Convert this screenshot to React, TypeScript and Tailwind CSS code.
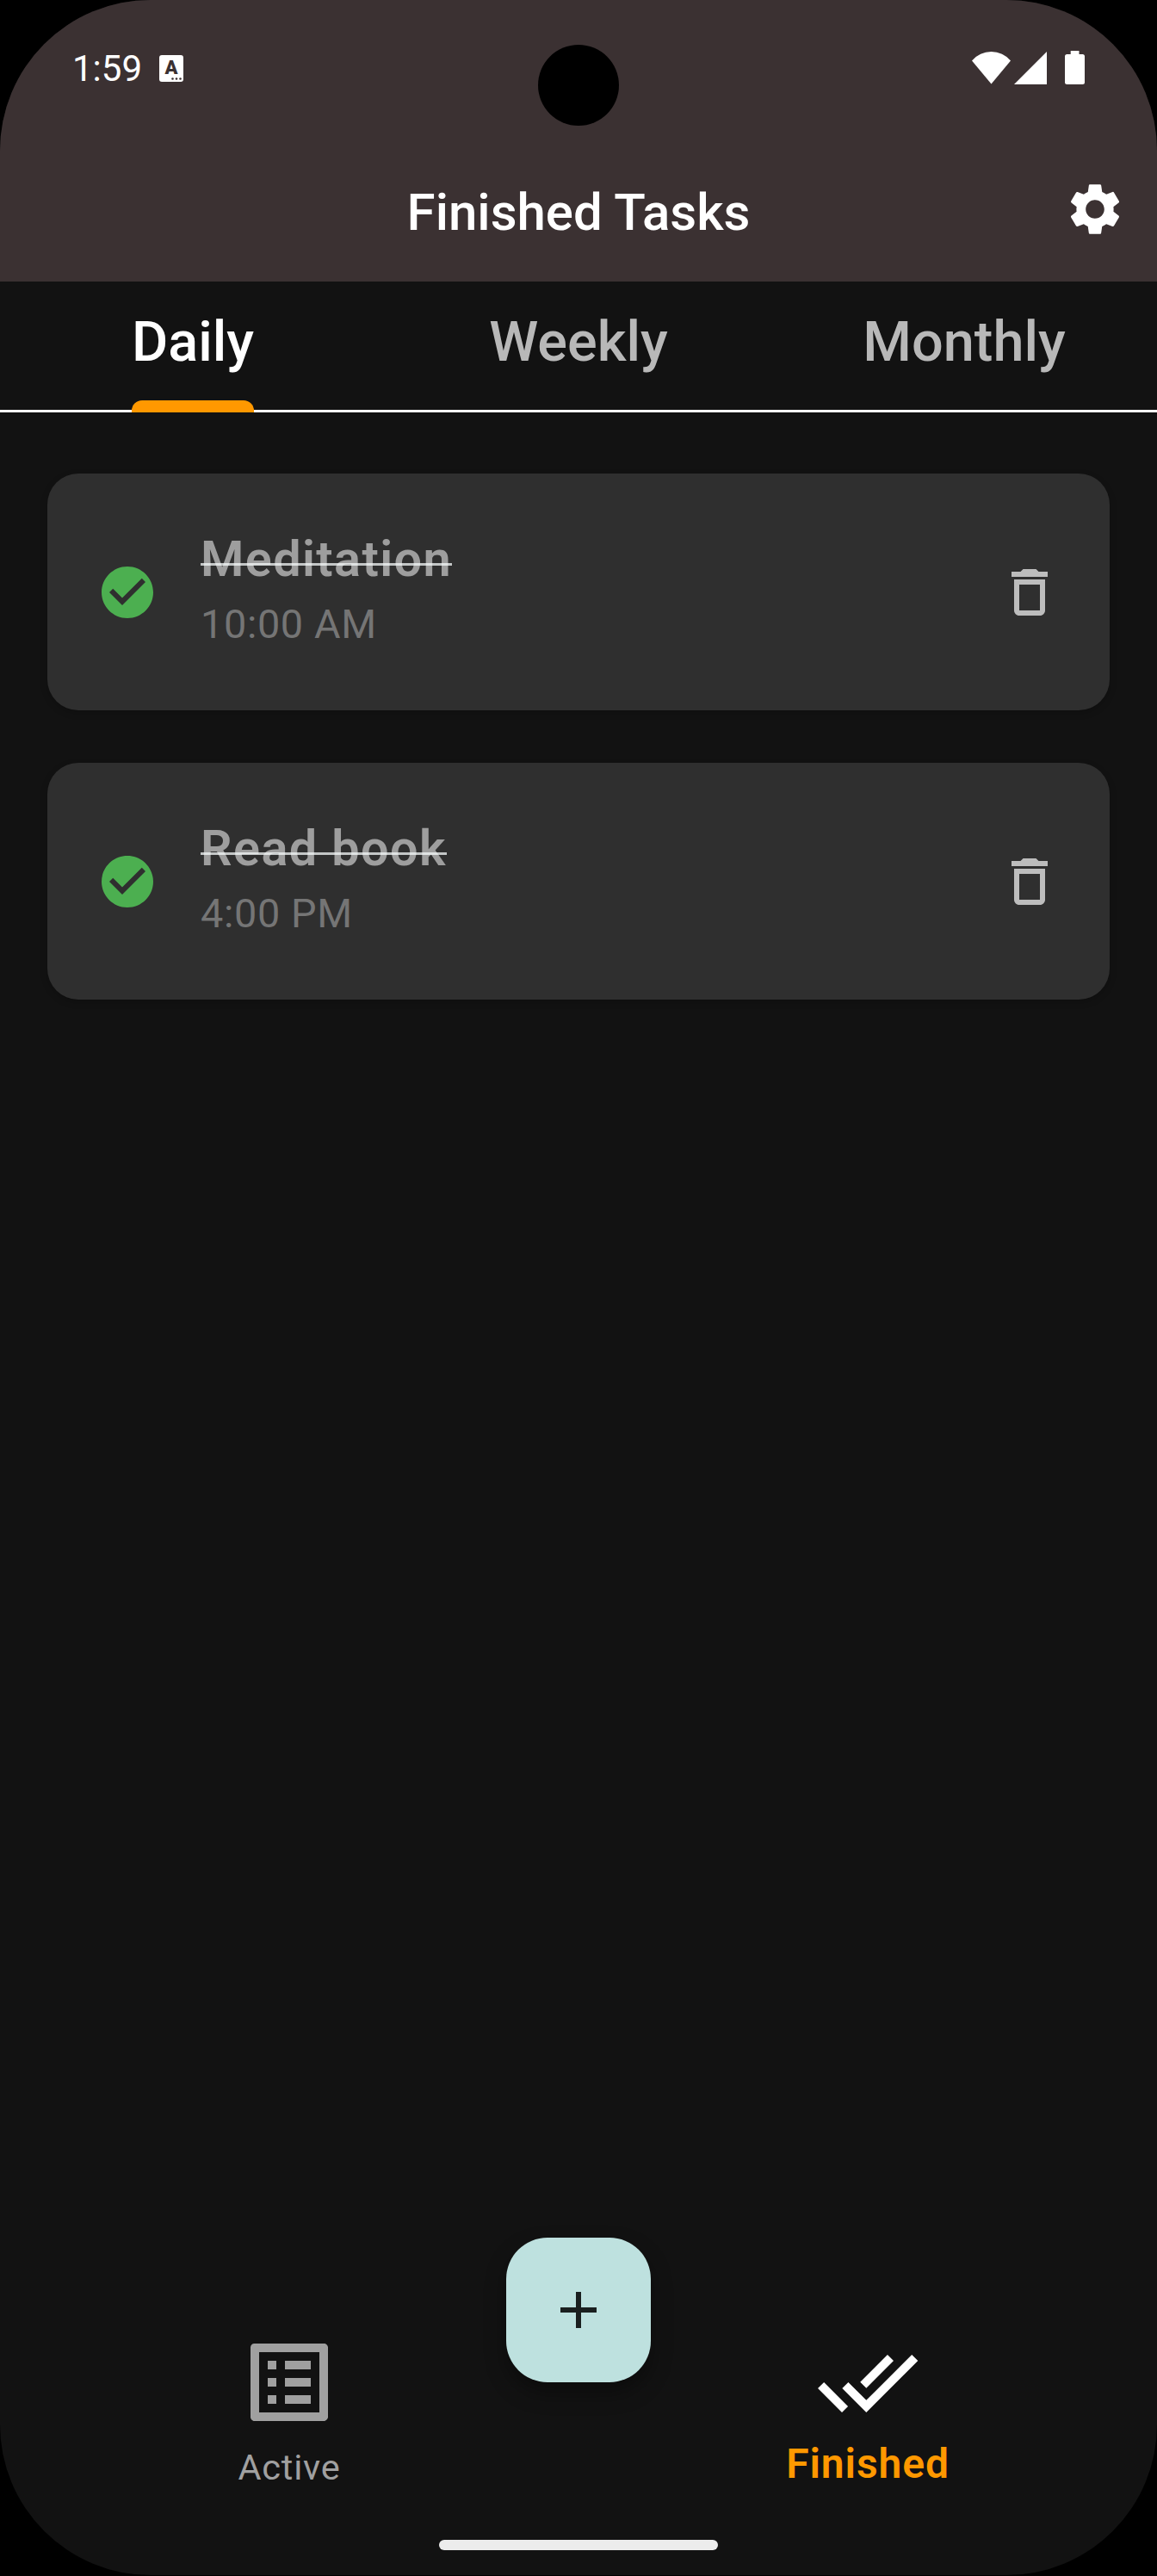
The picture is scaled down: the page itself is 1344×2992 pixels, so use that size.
import { MdAdd, MdCheckCircle, MdDeleteOutline, MdDoneAll, MdOutlineListAlt, MdSettings } from "react-icons/md";

const tabs = [
  { label: "Daily", selected: true },
  { label: "Weekly", selected: false },
  { label: "Monthly", selected: false },
];

const tasks = [
  { title: "Meditation", time: "10:00 AM" },
  { title: "Read book", time: "4:00 PM" },
];

function KeyboardBadge() {
  return (
    <div className="relative flex h-[31px] w-[28px] justify-center rounded-[3px] bg-white">
      <span className="mt-[2px] text-[22px] leading-[26px] font-black text-[#3b3132]">A</span>
      <svg className="absolute right-[2px] bottom-[2px]" width="12" height="3" viewBox="0 0 12 3" fill="#3b3132">
        <circle cx="1.5" cy="1.5" r="1.3" />
        <circle cx="6" cy="1.5" r="1.3" />
        <circle cx="10.5" cy="1.5" r="1.3" />
      </svg>
    </div>
  );
}

function StatusBar() {
  return (
    <div className="flex h-[159px] items-center justify-between px-[84px]">
      <div className="flex items-center gap-[20px]">
        <span className="text-[42px] leading-[50px]">1:59</span>
        <KeyboardBadge />
      </div>
      <div className="mb-[2px] flex items-center">
        <svg width="45" height="38" viewBox="0 0 45 38" fill="#fff">
          <path d="M22.5 37.6 0 10.4A29.6 29.6 0 0 1 45 10.4Z" />
        </svg>
        <svg className="ml-[4px]" width="38" height="38" viewBox="0 0 38 38" fill="#fff">
          <path d="M38 0V38H0Z" />
        </svg>
        <svg className="ml-[21px]" width="23" height="39" viewBox="0 0 23 39" fill="#fff">
          <path d="M6.7 0H16.5V4H20.5A2.5 2.5 0 0 1 23 6.5V36.5A2.5 2.5 0 0 1 20.5 39H2.5A2.5 2.5 0 0 1 0 36.5V6.5A2.5 2.5 0 0 1 2.5 4H6.7Z" />
        </svg>
      </div>
    </div>
  );
}

function TaskCard({ title, time }: { title: string; time: string }) {
  return (
    <li className="flex h-[275px] items-center rounded-[36px] bg-[#2f2f2f] px-[57px] shadow-[0_3px_8px_rgba(0,0,0,0.2)]">
      <MdCheckCircle className="size-[72px] text-[#4caf50]" />
      <div className="ml-[49px] flex flex-1 flex-col items-start">
        <span className="relative text-[57.6px] leading-[76px] font-semibold tracking-[1.4px] text-[#9e9e9e]">
          {title}
          <i className="absolute inset-x-0 top-[42px] h-[3px] bg-[#f6faf9]/75" />
        </span>
        <span className="text-[46.8px] leading-[75px] tracking-[0.65px] text-[#757575]">{time}</span>
      </div>
      <MdDeleteOutline className="size-[72px] text-[#bdbdbd]" />
    </li>
  );
}

export default function App() {
  return (
    <div className="h-[2992px] w-[1344px] bg-black font-[Roboto,sans-serif] text-white">
      <div className="relative flex h-[2991px] flex-col overflow-hidden rounded-[175px] bg-[#121212]">
        <header className="h-[327px] bg-[#3b3132]">
          <StatusBar />
          <div className="grid h-[168px] grid-cols-[1fr_auto_1fr] items-center">
            <span />
            <h1 className="pt-[7px] text-[60px] leading-[70px] font-medium">Finished Tasks</h1>
            <MdSettings className="mr-[36px] size-[72px] justify-self-end" />
          </div>
        </header>
        <div className="absolute top-[52px] left-1/2 size-[94px] -translate-x-1/2 rounded-full bg-black" />

        <nav className="grid h-[152px] grid-cols-3 border-b-[3px] border-white">
          {tabs.map((t) => (
            <div key={t.label} className="flex justify-center">
              <span
                className={
                  "relative h-[149px] text-[64.8px] leading-[140px] font-medium " +
                  (t.selected ? "text-white" : "text-[#b8b8b8]")
                }
              >
                {t.label}
                {t.selected && <i className="absolute inset-x-0 -bottom-[3px] h-[14px] rounded-t-[12px] bg-[#ff9800]" />}
              </span>
            </div>
          ))}
        </nav>

        <ul className="flex flex-1 flex-col gap-[61px] px-[55px] pt-[71px]">
          {tasks.map((t) => (
            <TaskCard key={t.title} {...t} />
          ))}
        </ul>

        <footer className="relative h-[284px]">
          <div className="grid grid-cols-2 text-center">
            <div className="flex flex-col items-center">
              <MdOutlineListAlt className="size-[120px] text-[#a0a0a0]" />
              <span className="mt-[14px] text-[41.5px] leading-[50px] tracking-[0.8px] text-[#a0a0a0]">Active</span>
            </div>
            <div className="flex flex-col items-center">
              <MdDoneAll className="size-[120px]" />
              <span className="mt-[7px] text-[48px] leading-[56px] font-semibold tracking-[0.9px] text-[#ff9800]">Finished</span>
            </div>
          </div>
          <button className="absolute -top-[108px] left-1/2 flex size-[168px] -translate-x-1/2 items-center justify-center rounded-[48px] bg-[#bee1df] shadow-[0_12px_24px_rgba(0,0,0,0.35)]">
            <MdAdd className="size-[72px] text-[#1a1f1f]" />
          </button>
          <div className="absolute bottom-[29px] left-1/2 h-[12px] w-[324px] -translate-x-1/2 rounded-full bg-[#ececec]" />
        </footer>
      </div>
    </div>
  );
}
